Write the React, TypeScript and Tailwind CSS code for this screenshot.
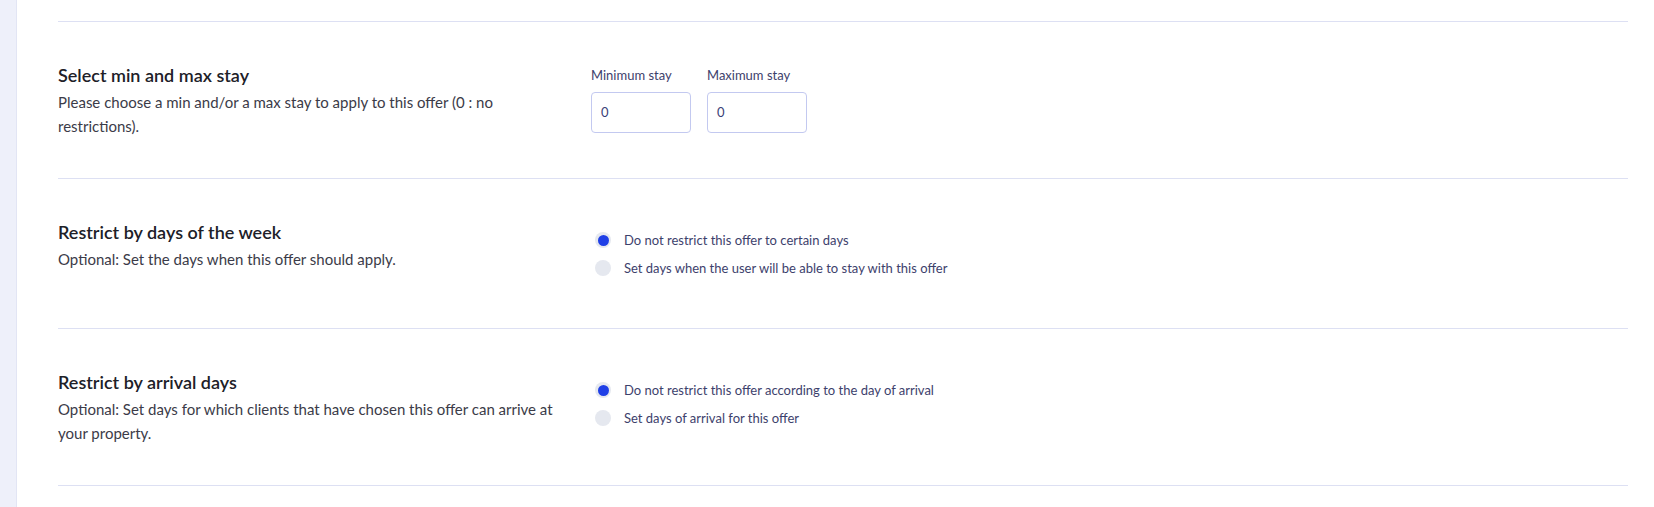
import React from "react";

const font = { fontFamily: "Lato, 'Noto Sans', sans-serif" };

function Radio({ checked, label }: { checked: boolean; label: string }) {
  return (
    <div className="flex h-[28px] items-center pl-[4px]">
      <span className="flex h-[16px] w-[16px] shrink-0 items-center justify-center rounded-full bg-[#e5e8ef]">
        {checked && <span className="h-[11px] w-[11px] rounded-full bg-[#1f3fe6]" />}
      </span>
      <span className="ml-[13px] text-[13px] leading-[20px] text-[#3d416c]">{label}</span>
    </div>
  );
}

function Section({
  title,
  desc,
  children,
  last,
}: {
  title: string;
  desc: string;
  children: React.ReactNode;
  last?: boolean;
}) {
  return (
    <div
      className={
        "flex border-t border-[#dde0f3] pt-[41px] pb-10" + (last ? " border-b" : "")
      }
    >
      <div className="w-[533px] shrink-0 pr-[20px]">
        <div className="mb-[3px] text-[18px] font-semibold leading-[24px] text-[#202028]">{title}</div>
        <div className="text-[15px] leading-[24px] text-[#3b3b48]">{desc}</div>
      </div>
      <div className="flex-1">{children}</div>
    </div>
  );
}

function NumberField({ label }: { label: string }) {
  return (
    <div className="flex flex-col">
      <div className="mt-[2px] text-[13px] leading-[20px] text-[#3d416c]">{label}</div>
      <div className="mt-[7px] flex h-[41px] w-[100px] items-center rounded-[4px] border border-[#c3c9f0] bg-white pl-[9px] text-[13px] text-[#3a3f78]">
        0
      </div>
    </div>
  );
}

export default function App() {
  return (
    <div className="flex min-h-screen bg-white" style={font}>
      <div className="w-[17px] shrink-0 border-r border-[#e2e5f4] bg-[#eef0fa]" />
      <div className="flex-1 pl-[41px] pr-[26px] pt-[21px]">
        <Section
          title="Select min and max stay"
          desc="Please choose a min and/or a max stay to apply to this offer (0 : no restrictions)."
        >
          <div className="flex gap-[16px]">
            <NumberField label="Minimum stay" />
            <NumberField label="Maximum stay" />
          </div>
        </Section>
        <Section
          title="Restrict by days of the week"
          desc="Optional: Set the days when this offer should apply."
        >
          <div className="py-[6px]">
            <Radio checked label="Do not restrict this offer to certain days" />
            <Radio checked={false} label="Set days when the user will be able to stay with this offer" />
          </div>
        </Section>
        <Section
          title="Restrict by arrival days"
          desc="Optional: Set days for which clients that have chosen this offer can arrive at your property."
          last
        >
          <div className="py-[6px]">
            <Radio checked label="Do not restrict this offer according to the day of arrival" />
            <Radio checked={false} label="Set days of arrival for this offer" />
          </div>
        </Section>
      </div>
    </div>
  );
}
